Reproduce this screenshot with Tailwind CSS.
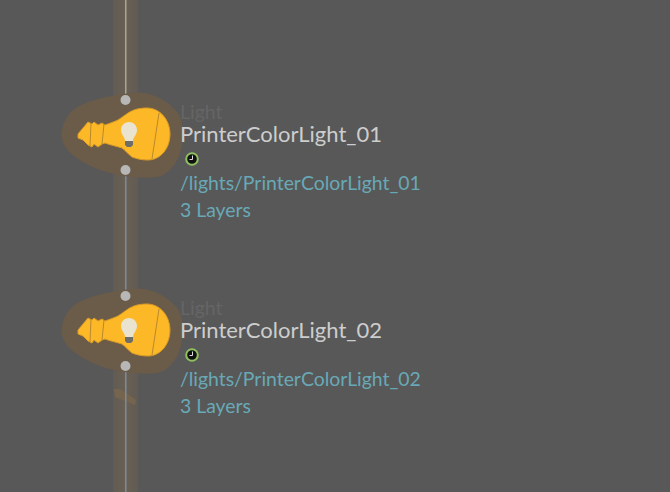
<!DOCTYPE html>
<html lang="en">
<head>
  <meta charset="UTF-8" />
  <title>Lights</title>
  <script src="https://cdn.jsdelivr.net/npm/@tailwindcss/browser@4"></script>
</head>
<body class="bg-[#585858] overflow-hidden font-['Lato',sans-serif]">
  <div class="relative w-[670px] h-[492px] overflow-hidden">
    <!-- wires -->
    <svg class="absolute left-0 top-0" width="670" height="492" viewBox="0 0 670 492">
      <defs>
        <linearGradient id="glow" x1="0" y1="0" x2="1" y2="0">
          <stop offset="0" stop-color="#6b5f4f" stop-opacity="0.5" />
          <stop offset="0.45" stop-color="#6f6353" stop-opacity="0.72" />
          <stop offset="0.55" stop-color="#6f6353" stop-opacity="0.72" />
          <stop offset="1" stop-color="#6b5f4f" stop-opacity="0.5" />
        </linearGradient>
      </defs>
      <rect x="113" y="0" width="25" height="492" fill="url(#glow)" />
      <path d="M114 389 L120 389 L136 400 L135 405 L115 397 Z" fill="#75654f" />
      <rect x="125" y="0" width="1.5" height="100" fill="#a9a591" />
      <rect x="125" y="170" width="1.5" height="126" fill="#7d8a99" />
      <rect x="125" y="366" width="1.5" height="126" fill="#7d8a99" />
    </svg>

    <!-- node 1 -->
    <div class="absolute left-[60px] top-[90px] flex items-start">
      <svg width="126" height="92" viewBox="60 90 126 92" class="shrink-0">
        <path d="M61.5 135 C62 121 70 110 81 105 C97 98 118 94 137 92.5 C150 91.5 168 100 177 112 C184 120 185 140 179 156 C173 170 164 177 153 177.500 C135 178.500 113 175 100 170 C90 166 82 162 77 158 C68 152 62 145 61.500 135 Z" fill="#6b5b49" />
        <path d="M78 134 L83 128 L88 122 L92 124 L94 122 L98 125 L102 123 L105 125 C110 123 114 122 118 120 C123 117 128 112 134 110 C138 108.500 143 108 147 108 C160 108 170 120 170 134 C170 149 160 160 148 160 C142 160 137 159 132 157 C128 154 125 150 122 148 C116 146 110 145 105 143 L102 144 L98 147 L94 144 L92 147 L88 145 L83 140 L78 138 Z" fill="#fdb827" stroke="#d79b26" stroke-width="1" />
        <path d="M91 123 L90 146 M104 124 L102 144 M159 113 L152 159" stroke="#b9892f" stroke-width="1" fill="none" />
        <path d="M129 122 C134 122 137 126 137 130 C137 135 133 137 133 141 L125 141 C125 137 121 135 121 130 C121 126 124 122 129 122 Z" fill="#e9e3cf" />
        <path d="M125 141 H133 V145 L131 147 H127 L125 145 Z" fill="#6e6e68" />
        <circle cx="125.5" cy="100" r="5" fill="#b7b7b7" />
        <circle cx="125.5" cy="170" r="5" fill="#b7b7b7" />
      </svg>
      <div class="-ml-[6px] mt-[12px] flex flex-col items-start">
        <div class="h-[20px] leading-[20px] text-[19.5px] text-[#656565]">Light</div>
        <div class="h-[24px] leading-[24px] text-[22px] text-[#cdcdcd]">PrinterColorLight_01</div>
        <svg class="mt-[6px] ml-[5px]" width="14" height="14" viewBox="0 0 14 14">
          <circle cx="7" cy="7" r="5.800" fill="#111" stroke="#8fc060" stroke-width="2" />
          <path d="M7.5 3.5 V7.5 H4.5" stroke="#ddd" stroke-width="1" fill="none" />
        </svg>
        <div class="mt-[4px] h-[26px] leading-[26px] text-[19.4px] text-[#69a9b7]">/lights/PrinterColorLight_01</div>
        <div class="mt-[1px] h-[26px] leading-[26px] text-[19.4px] text-[#69a9b7]">3 Layers</div>
      </div>
    </div>

    <!-- node 2 -->
    <div class="absolute left-[60px] top-[286px] flex items-start">
      <svg width="126" height="92" viewBox="60 90 126 92" class="shrink-0">
        <path d="M61.5 135 C62 121 70 110 81 105 C97 98 118 94 137 92.5 C150 91.5 168 100 177 112 C184 120 185 140 179 156 C173 170 164 177 153 177.500 C135 178.500 113 175 100 170 C90 166 82 162 77 158 C68 152 62 145 61.500 135 Z" fill="#6b5b49" />
        <path d="M78 134 L83 128 L88 122 L92 124 L94 122 L98 125 L102 123 L105 125 C110 123 114 122 118 120 C123 117 128 112 134 110 C138 108.500 143 108 147 108 C160 108 170 120 170 134 C170 149 160 160 148 160 C142 160 137 159 132 157 C128 154 125 150 122 148 C116 146 110 145 105 143 L102 144 L98 147 L94 144 L92 147 L88 145 L83 140 L78 138 Z" fill="#fdb827" stroke="#d79b26" stroke-width="1" />
        <path d="M91 123 L90 146 M104 124 L102 144 M159 113 L152 159" stroke="#b9892f" stroke-width="1" fill="none" />
        <path d="M129 122 C134 122 137 126 137 130 C137 135 133 137 133 141 L125 141 C125 137 121 135 121 130 C121 126 124 122 129 122 Z" fill="#e9e3cf" />
        <path d="M125 141 H133 V145 L131 147 H127 L125 145 Z" fill="#6e6e68" />
        <circle cx="125.5" cy="100" r="5" fill="#b7b7b7" />
        <circle cx="125.5" cy="170" r="5" fill="#b7b7b7" />
      </svg>
      <div class="-ml-[6px] mt-[12px] flex flex-col items-start">
        <div class="h-[20px] leading-[20px] text-[19.5px] text-[#656565]">Light</div>
        <div class="h-[24px] leading-[24px] text-[22px] text-[#cdcdcd]">PrinterColorLight_02</div>
        <svg class="mt-[6px] ml-[5px]" width="14" height="14" viewBox="0 0 14 14">
          <circle cx="7" cy="7" r="5.800" fill="#111" stroke="#8fc060" stroke-width="2" />
          <path d="M7.5 3.5 V7.5 H4.5" stroke="#ddd" stroke-width="1" fill="none" />
        </svg>
        <div class="mt-[4px] h-[26px] leading-[26px] text-[19.4px] text-[#69a9b7]">/lights/PrinterColorLight_02</div>
        <div class="mt-[1px] h-[26px] leading-[26px] text-[19.4px] text-[#69a9b7]">3 Layers</div>
      </div>
    </div>
  </div>
</body>
</html>
